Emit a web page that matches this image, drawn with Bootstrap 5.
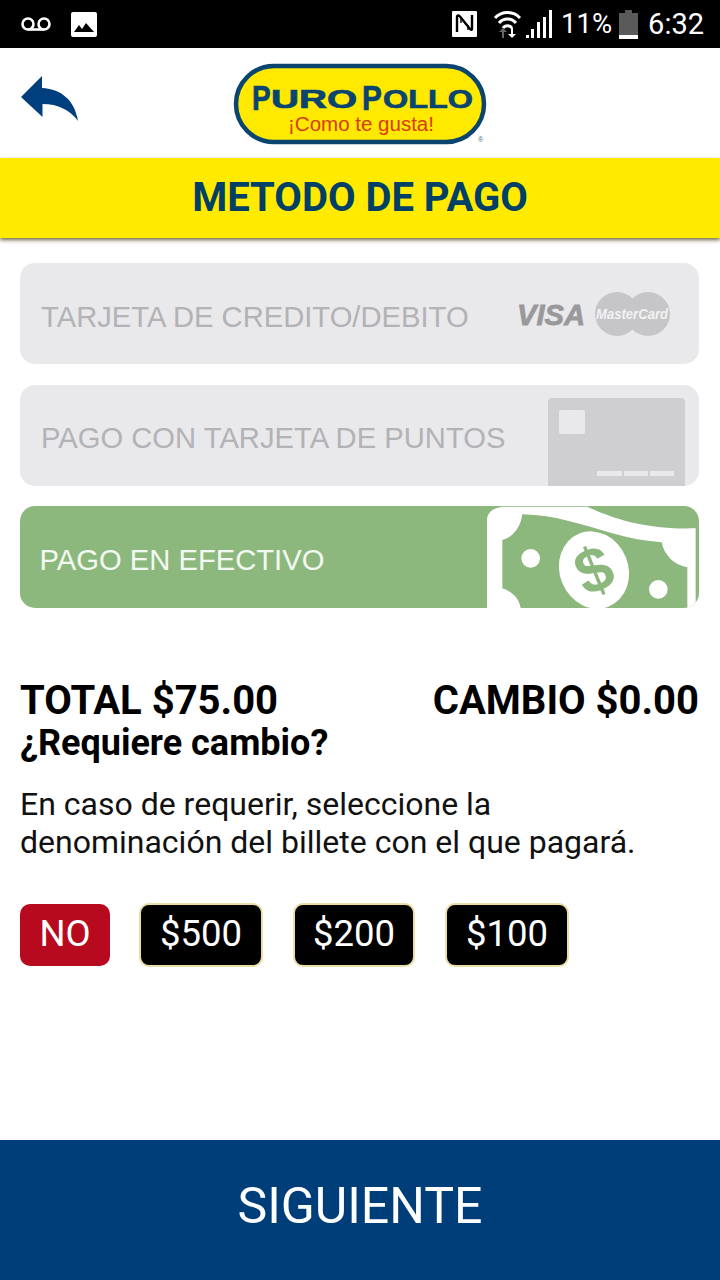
<!DOCTYPE html>
<html lang="es">
<head>
<meta charset="utf-8">
<title>Metodo de pago</title>
<link href="https://cdn.jsdelivr.net/npm/bootstrap@5.3.0/dist/css/bootstrap.min.css" rel="stylesheet">
<style>
html,body{margin:0;background:#fff}
body{font-family:Roboto,sans-serif;color:#000}
.screen{width:720px;height:1280px;overflow:hidden}
.status{height:48px;background:#000;color:#fff;font-size:29px;line-height:48px;padding:0 16px 0 21px}
.status svg{display:block}
.gapl{gap:20px}
.pct{font-size:27.5px;margin:0 7px 0 9px}
.batt{margin-right:10px}
.nfc{margin-right:17px}
.head{height:110px;position:relative}
.back{position:absolute;left:20px;top:27px}
.logo{margin-top:12px}
.titlebar{height:80px;background:#ffea00;color:#003f66;font-weight:700;font-size:40px;line-height:80px;box-shadow:0 2px 4px rgba(60,50,0,.75);position:relative}
.methods{padding:25px 21px 0 20px;gap:20.5px}
.method{height:101px;border-radius:15px;background:#e9e8eb;color:#b3b2b5;font-family:"Liberation Sans",sans-serif;font-size:29.2px;padding:8px 0 0 21px;overflow:hidden}
.method.green{height:102px;background:#8cb87e;color:#f4f8f2;padding-left:19.5px}
.pics{margin-right:26px;margin-top:-8px}
.cardpic,.cashpic{margin-top:-8px}
.totals{padding:71px 21px 0 20px;font-weight:700;font-size:40px;line-height:43px}
.ask{padding:0 20px;font-weight:700;font-size:36px;line-height:42px}
.hint{padding:21px 20px 0;font-size:32px;line-height:38px;color:#111}
.opts{padding:42px 20px 0;gap:30px}
.opt{height:64px;border-radius:10px;color:#fff;font-size:36.5px;line-height:58px;text-align:center;background:#000;border:2px solid #ecdca6}
.opt.no{height:62px;width:90px;background:#b80a1e;border:0;line-height:60px;margin-right:-1px}
.o1{width:124px}.o2{width:122px}.o3{width:124px}
.next{height:140px;background:#003e7a;color:#fff;font-size:50px;line-height:132px}
</style>
</head>
<body>
<div class="screen d-flex flex-column">
  <div class="status d-flex align-items-center justify-content-between">
    <div class="d-flex align-items-center gapl">
      <svg width="30" height="14" viewBox="0 0 30 14"><circle cx="7" cy="7" r="5.500" fill="none" stroke="#fff" stroke-width="2.600"/><circle cx="23" cy="7" r="5.500" fill="none" stroke="#fff" stroke-width="2.600"/><path d="M7 12.500H23" stroke="#fff" stroke-width="2.600"/></svg>
      <svg width="26" height="25" viewBox="0 0 26 25"><rect width="26" height="25" rx="2" fill="#fff"/><path d="M3 20 8 13l3 4 4-6 8 9Z" fill="#000"/></svg>
    </div>
    <div class="d-flex align-items-center">
      <svg class="nfc" width="25" height="26" viewBox="0 0 25 26"><rect width="25" height="26" rx="1" fill="#fff"/><path d="M5 21V6c0-2 1.500-2 3-.5L18 18c1.500 1.500 2 1 2-.5V4" fill="none" stroke="#000" stroke-width="2.400"/><path d="M9 12V7M16 19v-5" stroke="#000" stroke-width="1.400"/></svg>
      <svg width="58" height="30" viewBox="0 0 58 30"><path d="M1 9a17 17 0 0 1 25 0M5 14a11 11 0 0 1 17 0M9 19a5.500 5.500 0 0 1 9 0" fill="none" stroke="#fff" stroke-width="3"/><path d="M8 29v-6H5l4-4 4 4h-3v6Z" fill="#666"/><path d="M17 19v6h-3l4 4 4-4h-3v-6Z" fill="#fff"/><path d="M32 29h3v-3h-3ZM37 29h3v-9h-3ZM43 29h3V13h-3ZM49 29h3V8h-3ZM55 29h3V1h-3Z" fill="#fff"/></svg>
      <span class="pct">11%</span>
      <svg class="batt" width="19" height="30" viewBox="0 0 19 30"><path d="M0 4h6V1h7v3h6v23H0Z" fill="#5a5a5a"/><rect y="26" width="19" height="4" fill="#fff"/></svg>
      <span>6:32</span>
    </div>
  </div>
  <div class="head d-flex justify-content-center align-items-start">
    <svg class="back" width="60" height="48" viewBox="20 75 60 48"><path d="M21 97 42 76V88C62 89 75 101 78 121 70 110 58 104 42.500 104V117Z" fill="#003f7d"/></svg>
    <svg class="logo" width="258" height="90" viewBox="231 60 258 90">
      <rect x="236" y="66" width="248" height="76" rx="38" fill="#ffe900" stroke="#0a4570" stroke-width="4.500"/>
      <g font-family="Liberation Sans" font-weight="700" fill="#0a4570" stroke="#0a4570" stroke-width=".7">
        <text transform="translate(252 110) scale(.8 1)" font-size="35">P</text>
        <text transform="translate(271 108) scale(1.55 1)" font-size="25">URO</text>
        <text transform="translate(362 110) scale(.85 1)" font-size="35">P</text>
        <text transform="translate(383 108) scale(1.295 1)" font-size="25">OLLO</text>
      </g>
      <text x="288" y="131" font-family="Liberation Sans" font-size="20" fill="#d63c17" textLength="146" lengthAdjust="spacingAndGlyphs">¡Como te gusta!</text>
      <text x="478" y="142" font-family="Liberation Sans" font-size="7" fill="#4a6a80">®</text>
    </svg>
  </div>
  <div class="titlebar text-center">METODO DE PAGO</div>
  <div class="methods d-flex flex-column">
    <div class="method d-flex align-items-center justify-content-between">
      <span>TARJETA DE CREDITO/DEBITO</span>
      <svg class="pics" width="158" height="50" viewBox="0 0 158 50">
        <text x="2" y="36" font-family="Liberation Sans" font-size="30" font-weight="700" font-style="italic" fill="#99989b" stroke="#99989b" stroke-width=".8" textLength="68" lengthAdjust="spacingAndGlyphs">VISA</text>
        <circle cx="102" cy="25" r="22" fill="#c6c5c7"/><circle cx="133" cy="25" r="22" fill="#c6c5c7"/>
        <text x="81" y="30" font-family="Liberation Sans" font-size="14" font-weight="700" font-style="italic" fill="#f2f2f3" textLength="72" lengthAdjust="spacingAndGlyphs">MasterCard</text>
      </svg>
    </div>
    <div class="method d-flex justify-content-between">
      <span class="align-self-center">PAGO CON TARJETA DE PUNTOS</span>
      <svg class="cardpic" width="151" height="101" viewBox="0 0 151 101">
        <path d="M0 17Q0 13 4 13H133Q137 13 137 17V101H0Z" fill="#cfced0"/>
        <rect x="11" y="25" width="26" height="24" rx="2" fill="#e9e8eb"/>
        <path d="M49 86H74V91H49ZM76 86H100V91H76ZM102 86H126V91H102Z" fill="#e9e8eb"/>
      </svg>
    </div>
    <div class="method green d-flex justify-content-between">
      <span class="align-self-center">PAGO EN EFECTIVO</span>
      <svg class="cashpic" width="212" height="102" viewBox="144 753 636 306">
        <path d="M144 790Q150 760 190 755H445C520 790 620 825 770 820V1059H144Z" fill="#fff"/>
        <path d="M190 855C225 845 245 815 250 778 350 780 430 810 520 835 570 850 620 858 668 862 675 900 705 930 745 937V1059H245C240 1030 220 1010 190 1000Z" fill="#8cb87e"/>
        <circle cx="275" cy="910" r="28" fill="#fff"/><circle cx="658" cy="1003" r="28" fill="#fff"/>
        <ellipse cx="465" cy="945" rx="103" ry="118" transform="rotate(-22 465 945)" fill="#fff"/>
        <text x="465" y="1010" text-anchor="middle" font-family="Liberation Sans" font-weight="700" font-size="190" fill="#8cb87e" transform="rotate(-22 465 945)">$</text>
      </svg>
    </div>
  </div>
  <div class="totals d-flex justify-content-between"><span>TOTAL $75.00</span><span>CAMBIO $0.00</span></div>
  <div class="ask">¿Requiere cambio?</div>
  <div class="hint">En caso de requerir, seleccione la<br>denominación del billete con el que pagará.</div>
  <div class="opts d-flex align-items-center">
    <div class="opt no">NO</div>
    <div class="opt o1">$500</div>
    <div class="opt o2">$200</div>
    <div class="opt o3">$100</div>
  </div>
  <div class="next mt-auto text-center">SIGUIENTE</div>
</div>
<script src="https://cdn.jsdelivr.net/npm/bootstrap@5.3.0/dist/js/bootstrap.bundle.min.js"></script>
</body>
</html>
